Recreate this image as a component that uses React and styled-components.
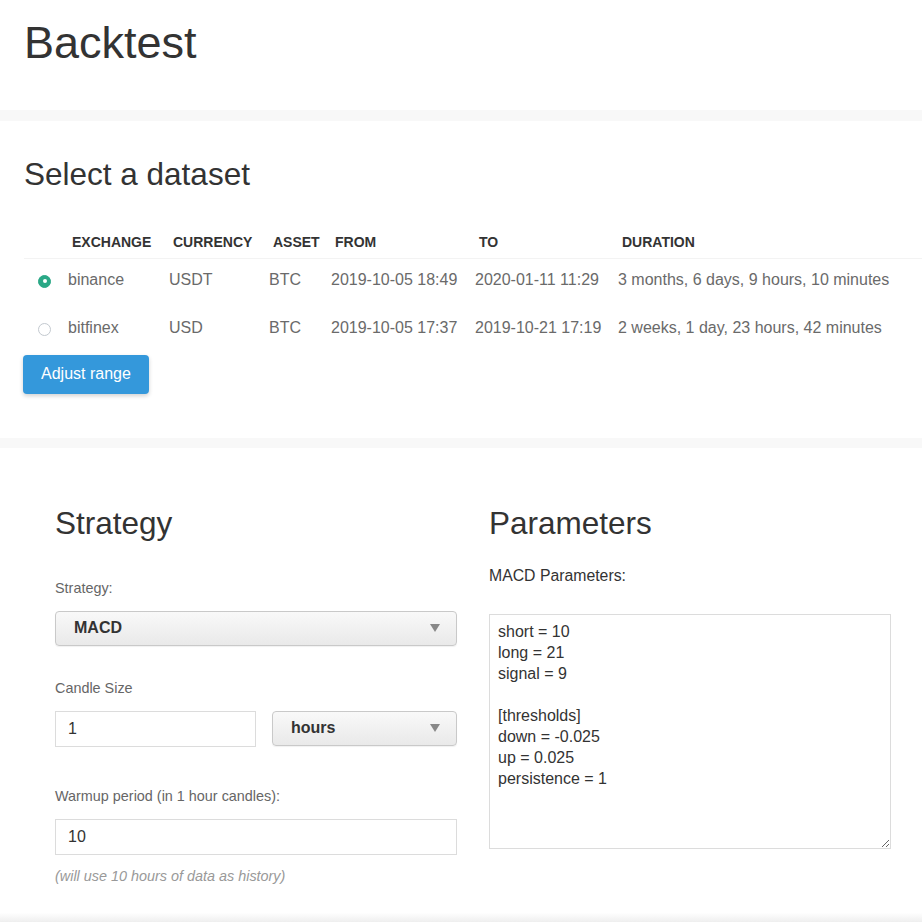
import React, { useState } from 'react';
import styled, { createGlobalStyle } from 'styled-components';

const GlobalStyle = createGlobalStyle`
  html, body {
    margin: 0;
    padding: 0;
    background: #fff;
    overflow: hidden;
  }
  body {
    font-family: "Liberation Sans", Arial, sans-serif;
    color: #333;
  }
  * {
    box-sizing: border-box;
  }
`;

const Page = styled.div`
  width: 922px;
  height: 922px;
  overflow: hidden;
`;

const Header = styled.header`
  height: 110px;
  padding: 17px 24px 0;
`;

const PageTitle = styled.h2`
  margin: 0;
  font-size: 45px;
  font-weight: 400;
  line-height: 1.15;
  color: #333;
`;

const Band = styled.div`
  height: ${(p) => p.h || 11}px;
  background: #f8f8f8;
`;

const Section = styled.section`
  padding: ${(p) => p.pad};
  background: #fff;
`;

const SectionTitle = styled.h3`
  margin: 0;
  font-size: 31.5px;
  font-weight: 400;
  line-height: 1.15;
  color: #333;
`;

const Table = styled.table`
  width: 100%;
  margin-top: 35px;
  border-collapse: collapse;
  table-layout: fixed;
`;

const Th = styled.th`
  height: 31px;
  padding: 0 0 0 12px;
  text-align: left;
  font-size: 14px;
  font-weight: 700;
  text-transform: uppercase;
  color: #333;
  white-space: nowrap;
  border-bottom: 1px solid #f3f3f3;
`;

const Td = styled.td`
  padding: 12px 0 18px 8px;
  line-height: 18px;
  font-size: 16px;
  color: #6a6a6a;
  white-space: nowrap;
  vertical-align: top;
`;

const RadioCell = styled.td`
  padding: 16px 0 0 14px;
  vertical-align: top;
`;

const Radio = styled.span`
  display: block;
  width: 13px;
  height: 13px;
  border-radius: 50%;
  border: 1px solid ${(p) => (p.checked ? '#2aa886' : '#c3c9cf')};
  background: ${(p) => (p.checked ? '#2aa886' : '#fff')};
  position: relative;
  cursor: pointer;

  &::after {
    content: '';
    display: ${(p) => (p.checked ? 'block' : 'none')};
    position: absolute;
    left: 3.5px;
    top: 3.5px;
    width: 4px;
    height: 4px;
    border-radius: 50%;
    background: #fff;
  }
`;

const Button = styled.button`
  display: block;
  margin-left: -1px;
  width: 126px;
  height: 39px;
  padding: 0 18px;
  border: none;
  border-radius: 4px;
  background: #3498db;
  color: #fff;
  font-family: inherit;
  font-size: 16px;
  text-align: left;
  box-shadow: 0 2px 4px rgba(0, 0, 0, 0.18);
  cursor: pointer;
`;

const Columns = styled.div`
  display: grid;
  grid-template-columns: 402px 402px;
  column-gap: 32px;
`;

const Column = styled.div`
  display: flex;
  flex-direction: column;
`;

const Label = styled.div`
  margin-top: ${(p) => p.mt}px;
  line-height: 20px;
  font-size: ${(p) => p.size || 14.4}px;
  color: ${(p) => p.color || '#666'};
`;

const SelectBox = styled.div`
  margin-top: ${(p) => (p.mt === undefined ? 13 : p.mt)}px;
  width: ${(p) => p.w || 402}px;
  height: 35px;
  padding: 0 18px;
  display: flex;
  align-items: center;
  justify-content: space-between;
  border: 1px solid #c9c9c9;
  border-radius: 4px;
  background: linear-gradient(#f9f9f9, #e9e9e9);
  box-shadow: 0 1px 1px rgba(0, 0, 0, 0.06);
  font-size: 16px;
  font-weight: 700;
  color: #333;
`;

const Caret = styled.span`
  width: 0;
  height: 0;
  margin-right: -2px;
  border-left: 5px solid transparent;
  border-right: 5px solid transparent;
  border-top: 8px solid #888;
`;

const InputRow = styled.div`
  margin-top: 13px;
  display: flex;
  gap: 16px;
`;

const Input = styled.input`
  display: block;
  width: ${(p) => p.w || 402}px;
  height: 36px;
  margin-top: ${(p) => p.mt || 0}px;
  padding: 0 12px;
  border: 1px solid #dcdcdc;
  background: #fff;
  font-family: inherit;
  font-size: 16px;
  color: #333;
  outline: none;
`;

const Note = styled.div`
  margin-top: 11px;
  line-height: 20px;
  font-size: 14.4px;
  font-style: italic;
  color: #999;
`;

const Params = styled.textarea`
  margin-top: 28px;
  width: 402px;
  height: 235px;
  padding: 6px 8px;
  border: 1px solid #dcdcdc;
  font-family: inherit;
  font-size: 16px;
  line-height: 21px;
  color: #333;
  resize: both;
  outline: none;
`;

const BottomShade = styled.div`
  height: 22px;
  background: linear-gradient(#fff, #fff 30%, #e4e4e4);
`;

const datasets = [
  {
    exchange: 'binance',
    currency: 'USDT',
    asset: 'BTC',
    from: '2019-10-05 18:49',
    to: '2020-01-11 11:29',
    duration: '3 months, 6 days, 9 hours, 10 minutes',
  },
  {
    exchange: 'bitfinex',
    currency: 'USD',
    asset: 'BTC',
    from: '2019-10-05 17:37',
    to: '2019-10-21 17:19',
    duration: '2 weeks, 1 day, 23 hours, 42 minutes',
  },
];

const macdParams = `short = 10
long = 21
signal = 9

[thresholds]
down = -0.025
up = 0.025
persistence = 1`;

export default function App() {
  const [selected, setSelected] = useState(0);

  return (
    <Page>
      <GlobalStyle />
      <Header>
        <PageTitle>Backtest</PageTitle>
      </Header>
      <Band />

      <Section pad="35px 0 44px 24px">
        <SectionTitle>Select a dataset</SectionTitle>
        <Table>
          <colgroup>
            <col style={{ width: 36 }} />
            <col style={{ width: 101 }} />
            <col style={{ width: 100 }} />
            <col style={{ width: 62 }} />
            <col style={{ width: 144 }} />
            <col style={{ width: 143 }} />
            <col />
          </colgroup>
          <thead>
            <tr>
              <Th />
              <Th>Exchange</Th>
              <Th>Currency</Th>
              <Th>Asset</Th>
              <Th>From</Th>
              <Th>To</Th>
              <Th>Duration</Th>
            </tr>
          </thead>
          <tbody>
            {datasets.map((set, i) => (
              <tr key={set.exchange} onClick={() => setSelected(i)}>
                <RadioCell>
                  <Radio checked={selected === i} />
                </RadioCell>
                <Td>{set.exchange}</Td>
                <Td>{set.currency}</Td>
                <Td>{set.asset}</Td>
                <Td>{set.from}</Td>
                <Td>{set.to}</Td>
                <Td>{set.duration}</Td>
              </tr>
            ))}
          </tbody>
        </Table>
        <Button>Adjust range</Button>
      </Section>
      <Band h={10} />

      <Section pad="57px 0 20px 55px">
        <Columns>
          <Column>
            <SectionTitle>Strategy</SectionTitle>
            <Label mt={37}>Strategy:</Label>
            <SelectBox>
              MACD
              <Caret />
            </SelectBox>
            <Label mt={32}>Candle Size</Label>
            <InputRow>
              <Input w={201} defaultValue="1" />
              <SelectBox w={185} mt={0}>
                hours
                <Caret />
              </SelectBox>
            </InputRow>
            <Label mt={39}>Warmup period (in 1 hour candles):</Label>
            <Input mt={13} defaultValue="10" />
            <Note>(will use 10 hours of data as history)</Note>
          </Column>
          <Column>
            <SectionTitle>Parameters</SectionTitle>
            <Label mt={25} size={15.8} color="#333">
              MACD Parameters:
            </Label>
            <Params defaultValue={macdParams} spellCheck={false} />
          </Column>
        </Columns>
      </Section>
      <BottomShade />
    </Page>
  );
}
